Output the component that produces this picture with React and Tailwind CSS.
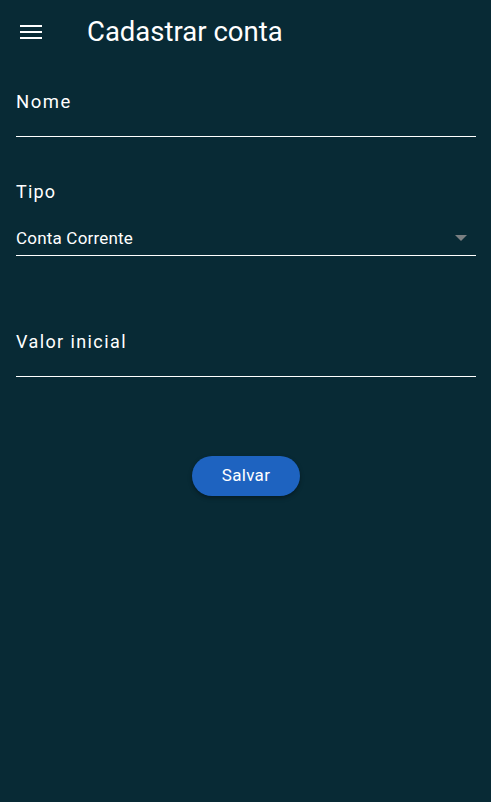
export default function App() {
    return (
        <div className="min-h-[802px] w-full bg-[#082a35] text-white font-['Roboto',sans-serif]">
            <header className="flex h-[64px] items-center">
                <button className="ml-[20px] flex w-[22px] flex-col gap-[3.5px]">
                    <span className="h-[2.5px] w-full bg-white" />
                    <span className="h-[2.5px] w-full bg-white" />
                    <span className="h-[2.5px] w-full bg-white" />
                </button>
                <h1 className="ml-[45px] text-[27.5px] leading-none">Cadastrar conta</h1>
            </header>

            <form className="pl-[16px] pr-[15px]">
                <div className="h-[73px] border-b border-white pt-[27px]">
                    <label className="text-[18.5px] leading-none tracking-[1.5px]">Nome</label>
                </div>

                <div className="mt-[46px]">
                    <label className="block text-[18px] leading-none tracking-[1.2px]">Tipo</label>
                    <div className="mt-[22px] flex h-[33px] items-start justify-between border-b border-white pt-[5px]">
                        <span className="text-[17px] leading-[20px] tracking-[0.2px]">Conta Corrente</span>
                        <svg width="12" height="6" viewBox="0 0 12 6" className="mr-[9px] mt-[7px]">
                            <path d="M0 0h12L6 6z" fill="#7a7f82" />
                        </svg>
                    </div>
                </div>

                <div className="mt-[72px] h-[49px] pt-[3px] border-b border-white">
                    <label className="text-[18px] leading-none tracking-[1.4px]">Valor inicial</label>
                </div>

                <div className="mt-[79px] flex justify-center">
                    <button
                        type="button"
                        className="h-[40px] w-[108px] rounded-full bg-[#1e63c0] text-[17px] tracking-[0.3px] shadow-[0_2px_4px_rgba(0,0,0,0.35)]"
                    >
                        Salvar
                    </button>
                </div>
            </form>
        </div>
    );
}
